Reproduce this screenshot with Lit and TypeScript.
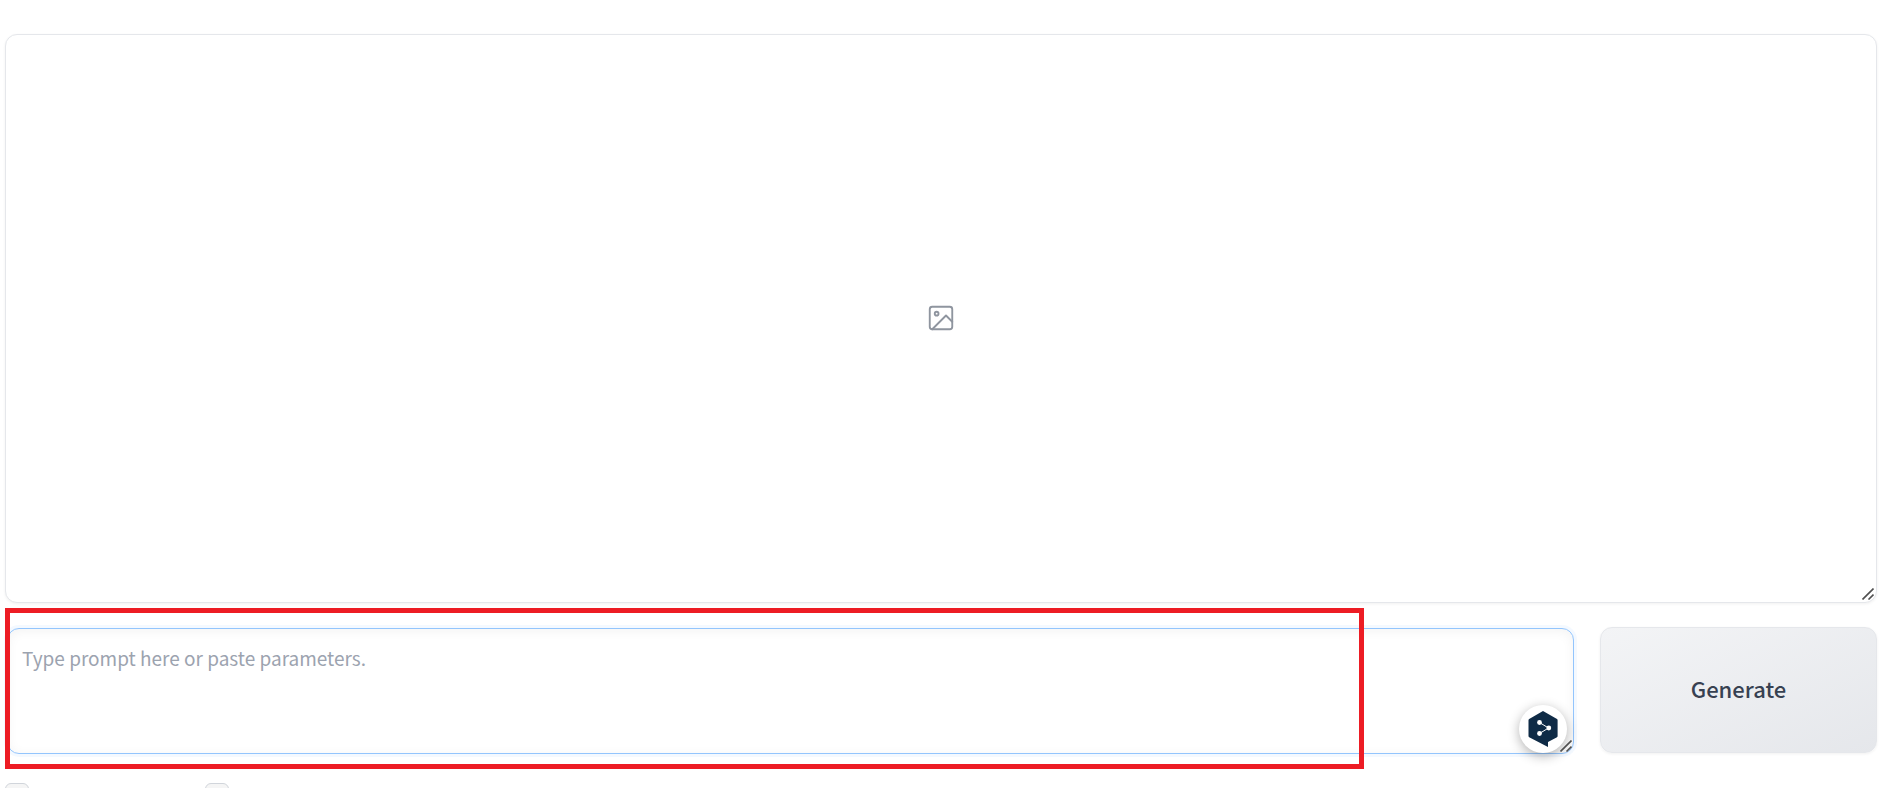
import { LitElement, html, css, svg } from "lit";
import { customElement, state } from "lit/decorators.js";

const grip = html`<svg class="grip" viewBox="0 0 12 12" aria-hidden="true">
  ${svg`<path d="M0.5 11.5 11.5 0.5M6.5 11.5 11.5 6.5" fill="none" stroke="#505050" stroke-width="1.6" />`}
</svg>`;

@customElement("app-root")
export class AppRoot extends LitElement {
  static styles = css`
    :host {
      display: block;
      box-sizing: border-box;
      height: 100vh;
      overflow: hidden;
      padding: 34px 13px 0 5px;
      background: #fff;
      font-family: "Source Sans Pro", "Noto Sans CJK SC", sans-serif;
    }
    * {
      box-sizing: border-box;
    }
    .page {
      display: flex;
      flex-direction: column;
    }
    .gallery {
      position: relative;
      display: grid;
      place-items: center;
      height: 569px;
      padding-bottom: 1px;
      border: 1px solid #e5e7eb;
      border-radius: 12px;
      box-shadow: 0 1px 3px rgba(0, 0, 0, 0.06);
      background: #fff;
    }
    .picture {
      width: 30px;
      height: 30px;
      color: #8f959f;
    }
    .grip {
      position: absolute;
      right: 2px;
      bottom: 2px;
      width: 12px;
      height: 12px;
    }
    .composer {
      position: relative;
      display: flex;
      align-items: flex-start;
      gap: 26px;
      padding: 24px 0 29px;
    }
    .prompt {
      position: relative;
      flex: 1;
      display: flex;
      padding: 1px 0 0 2px;
    }
    .text {
      flex: 1;
      height: 126px;
      margin: 0;
      padding: 14px;
      border: 1px solid #93c5fd;
      border-radius: 12px;
      outline: none;
      resize: none;
      background: #fff;
      box-shadow: 0 0 0 3px rgba(219, 234, 254, 0.3),
        inset 0 2px 12px rgba(0, 0, 0, 0.05);
      color: #1f2937;
      font: 400 19px/30px "Source Sans Pro", "Noto Sans CJK SC", sans-serif;
    }
    .text::placeholder {
      color: #9ca3af;
      opacity: 1;
    }
    .assistant {
      position: absolute;
      right: 7px;
      bottom: 1px;
      display: grid;
      place-items: center;
      width: 48px;
      height: 48px;
      padding: 0;
      border: 0;
      border-radius: 50%;
      background: #fff;
      box-shadow: 0 3px 12px rgba(0, 0, 0, 0.3);
    }
    .mark {
      width: 30px;
      height: 36px;
    }
    .generate {
      width: 277px;
      height: 126px;
      padding: 0 0 4px;
      border: 1px solid #e5e7eb;
      border-radius: 12px;
      background: linear-gradient(to bottom right, #f3f4f6, #e5e7eb);
      box-shadow: 0 1px 3px rgba(0, 0, 0, 0.06);
      color: #374151;
      font: 500 22px/30px "Source Sans Pro", "Noto Sans CJK SC", sans-serif;
    }
    .highlight {
      position: absolute;
      top: 5px;
      bottom: 14px;
      left: 0;
      width: 72.6%;
      border: 5px solid #ed1c24;
      pointer-events: none;
    }
    .options {
      display: flex;
      gap: 176px;
    }
    .check {
      appearance: none;
      width: 24px;
      height: 24px;
      margin: 0;
      border: 1px solid #d1d5db;
      border-radius: 6px;
      background: #f5f5f5;
    }
    .check:checked {
      background: #3b82f6;
    }
  `;

  @state() private prompt = "";

  render() {
    return html`
      <main class="page">
        <section class="gallery" aria-label="Image gallery">
          <svg class="picture" viewBox="0 0 24 24" fill="none" stroke="currentColor"
            stroke-width="1.5" stroke-linecap="round" stroke-linejoin="round" aria-hidden="true">
            <rect x="3" y="3" width="18" height="18" rx="2" />
            <circle cx="8.5" cy="8.5" r="1.5" />
            <polyline points="21 15 16 10 5 21" />
          </svg>
          ${grip}
        </section>
        <section class="composer">
          <div class="prompt">
            <textarea class="text" aria-label="Prompt"
              placeholder="Type prompt here or paste parameters."
              .value=${this.prompt}
              @input=${(e: Event) => (this.prompt = (e.target as HTMLTextAreaElement).value)}
            ></textarea>
            <button class="assistant" type="button" aria-label="Translate">
              <svg class="mark" viewBox="0 0 30 36" aria-hidden="true">
                <path fill="#0f2b46" d="M15 0 29 8q.6.4.6 1.2V25q0 .8-.6 1.2L20 31v5L1.2 26.2Q.5 25.8.5 25V9.200Q.5 8.400 1.200 8Z" />
                <path d="M11.500 11.500 20.500 17 11.500 22.500" fill="none" stroke="#fff" stroke-width="1" />
                <g fill="#fff">
                  <circle cx="11.500" cy="11.500" r="2.400" />
                  <circle cx="20.800" cy="17" r="2.400" />
                  <circle cx="11.500" cy="22.500" r="2.400" />
                </g>
              </svg>
            </button>
            ${grip}
          </div>
          <button class="generate" type="button">Generate</button>
          <div class="highlight"></div>
        </section>
        <section class="options">
          <input class="check" type="checkbox" aria-label="Input image" />
          <input class="check" type="checkbox" aria-label="Advanced" />
        </section>
      </main>
    `;
  }
}
